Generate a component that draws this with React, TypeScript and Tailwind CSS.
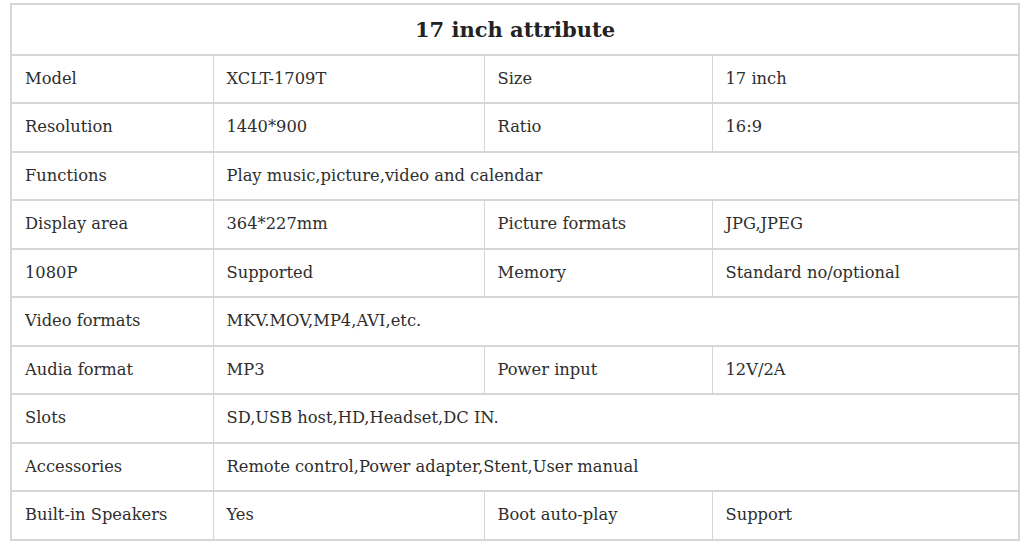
import React from 'react';

type Row = { cells: string[] };

const rows: Row[] = [
    { cells: ['Model', 'XCLT-1709T', 'Size', '17 inch'] },
    { cells: ['Resolution', '1440*900', 'Ratio', '16:9'] },
    { cells: ['Functions', 'Play music,picture,video and calendar'] },
    { cells: ['Display area', '364*227mm', 'Picture formats', 'JPG,JPEG'] },
    { cells: ['1080P', 'Supported', 'Memory', 'Standard no/optional'] },
    { cells: ['Video formats', 'MKV.MOV,MP4,AVI,etc.'] },
    { cells: ['Audia format', 'MP3', 'Power input', '12V/2A'] },
    { cells: ['Slots', 'SD,USB host,HD,Headset,DC IN.'] },
    { cells: ['Accessories', 'Remote control,Power adapter,Stent,User manual'] },
    { cells: ['Built-in Speakers', 'Yes', 'Boot auto-play', 'Support'] },
];

const cellCls = 'border-x border-t-2 border-[#d6d6d6] pl-[13px] pr-2 text-left align-middle font-normal';

export default function App() {
    return (
        <div className="w-[1024px] h-[546px] bg-white pt-[3px] pl-[10px]" style={{ fontFamily: '"DejaVu Serif", "Liberation Serif", serif' }}>
            <table className="w-[1008px] border-collapse border-2 border-[#d6d6d6] text-[#2e2e2e] text-[16.3px] table-fixed">
                <colgroup>
                    <col className="w-[202px]" />
                    <col className="w-[271px]" />
                    <col className="w-[228px]" />
                    <col className="w-[307px]" />
                </colgroup>
                <thead>
                    <tr className="h-[50.5px]">
                        <th colSpan={4} className="text-center text-[21px] font-bold text-[#222] border-2 border-[#d6d6d6]">
                            17 inch attribute
                        </th>
                    </tr>
                </thead>
                <tbody>
                    {rows.map((r, i) => (
                        <tr key={i} className="h-[48.5px]">
                            <td className={cellCls}>{r.cells[0]}</td>
                            {r.cells.length === 2 ? (
                                <td colSpan={3} className={cellCls}>{r.cells[1]}</td>
                            ) : (
                                <>
                                    <td className={cellCls}>{r.cells[1]}</td>
                                    <td className={cellCls}>{r.cells[2]}</td>
                                    <td className={cellCls}>{r.cells[3]}</td>
                                </>
                            )}
                        </tr>
                    ))}
                </tbody>
            </table>
        </div>
    );
}
